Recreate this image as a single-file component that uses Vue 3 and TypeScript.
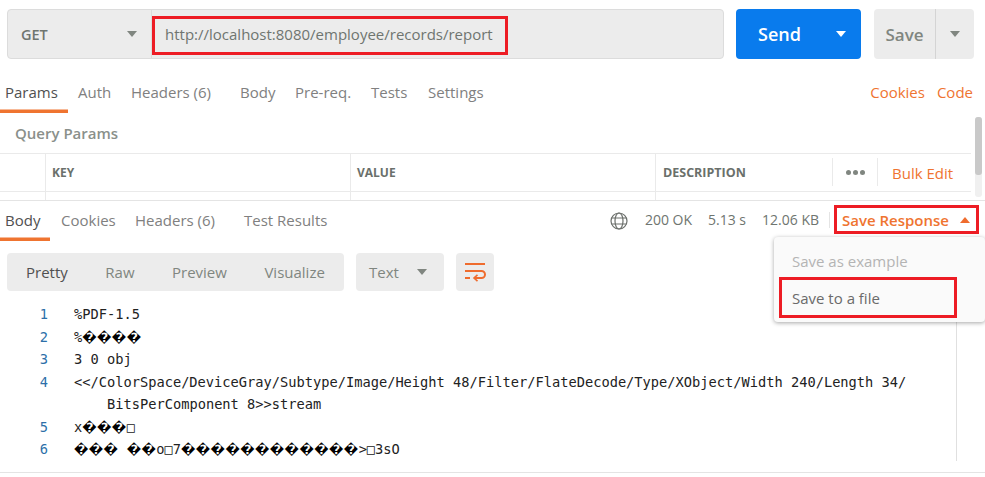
<script setup lang="ts">
const requestTabs = [
  { label: 'Params', active: true, w: 68, pad: 5 },
  { label: 'Auth', w: 63, pad: 10 },
  { label: 'Headers (6)', w: 109, pad: 0 },
  { label: 'Body', w: 55, pad: 0 },
  { label: 'Pre-req.', w: 76, pad: 0 },
  { label: 'Tests', w: 57, pad: 0 },
  { label: 'Settings', w: 70, pad: 0 },
]
const responseTabs = [
  { label: 'Body', active: true, w: 50, pad: 5 },
  { label: 'Cookies', w: 75, pad: 11 },
  { label: 'Headers (6)', w: 109, pad: 10 },
  { label: 'Test Results', w: 100, pad: 10 },
]
const views = ['Pretty', 'Raw', 'Preview', 'Visualize']
const R = '\uFFFD'
const T = '\u25A1'
const raw = [
  { n: '1', text: '%PDF-1.5' },
  { n: '2', text: '%' + R.repeat(4) },
  { n: '3', text: '3 0 obj' },
  { n: '4', text: '<</ColorSpace/DeviceGray/Subtype/Image/Height 48/Filter/FlateDecode/Type/XObject/Width 240/Length 34/' },
  { n: '', text: 'BitsPerComponent 8>>stream', wrap: true },
  { n: '5', text: 'x' + R.repeat(3) + T },
  { n: '6', text: R.repeat(3) + ' ' + R.repeat(2) + 'o' + T + '7' + R.repeat(12) + '>' + T + '3sO' },
]
const lines = raw.map((l) => ({
  ...l,
  parts: l.text.split(/(\uFFFD+)/).filter(Boolean).map((s) => ({ s, rep: s[0] === R })),
}))
</script>

<template>
  <div class="page">
    <div class="bar">
      <div class="url-box">
        <div class="method"><span>GET</span><i class="caret grey"></i></div>
        <div class="url"><span>http://localhost:8080/employee/records/report</span></div>
        <div class="mark mark-url"></div>
      </div>
      <div class="send"><span>Send</span><i class="caret white"></i></div>
      <div class="save"><span class="save-label">Save</span><span class="save-arrow"><i class="caret grey"></i></span></div>
    </div>

    <div class="tabs req-tabs">
      <span v-for="t in requestTabs" :key="t.label" class="tab" :class="{ active: t.active }" :style="{ width: t.w + 'px', paddingLeft: t.pad + 'px' }">{{ t.label }}</span>
      <span class="spacer"></span>
      <span class="link cookies">Cookies</span>
      <span class="link code-link">Code</span>
    </div>

    <div class="params">
      <div class="params-title">Query Params</div>
      <div class="table">
        <div class="row head">
          <div class="cell c0"></div>
          <div class="cell c1">KEY</div>
          <div class="cell c1">VALUE</div>
          <div class="cell c2">DESCRIPTION</div>
          <div class="cell c3"><i></i><i></i><i></i></div>
          <div class="cell c4">Bulk Edit</div>
        </div>
        <div class="row stub">
          <div class="cell c0"></div>
          <div class="cell c1"></div>
          <div class="cell c1"></div>
          <div class="cell c2"></div>
        </div>
      </div>
      <div class="scroll"><div class="thumb"></div></div>
    </div>

    <div class="response">
      <div class="tabs res-tabs">
        <span v-for="t in responseTabs" :key="t.label" class="tab" :class="{ active: t.active }" :style="{ width: t.w + 'px', paddingLeft: t.pad + 'px' }">{{ t.label }}</span>
        <span class="spacer"></span>
        <svg class="globe" width="18" height="18" viewBox="0 0 18 18" fill="none" stroke="#6b6f6b" stroke-width="1.2">
          <circle cx="9" cy="9" r="8" />
          <ellipse cx="9" cy="9" rx="4" ry="8" />
          <path d="M1.6 6h14.8M1.6 12h14.8" />
        </svg>
        <span class="meta m1">200 OK</span>
        <span class="meta m2">5.13 s</span>
        <span class="meta m3">12.06 KB</span>
        <span class="sep"></span>
        <div class="save-response">
          <span>Save Response</span>
          <i class="caret up"></i>
        </div>
      </div>

      <div class="toolbar">
        <div class="views">
          <span v-for="(v, i) in views" :key="v" class="view" :class="{ on: i === 0 }">{{ v }}</span>
        </div>
        <div class="format"><span>Text</span><i class="caret grey"></i></div>
        <div class="wrap-btn">
          <svg width="22" height="20" viewBox="0 0 22 20" fill="none" stroke="#ef6c2e" stroke-width="2">
            <path d="M1 2h20" />
            <path d="M1 9h16.5a3.2 3.2 0 0 1 0 7H11" />
            <path d="M1 16h5" />
            <path d="M13.5 12.8 10 16l3.5 3.2" stroke-width="1.6" />
          </svg>
        </div>
      </div>

      <div class="code">
        <div v-for="(l, i) in lines" :key="i" class="line">
          <span class="num">{{ l.n }}</span>
          <span class="txt" :class="{ wrapped: l.wrap }"><span v-for="(p, j) in l.parts" :key="j" :class="{ rep: p.rep }">{{ p.s }}</span></span>
        </div>
      </div>
    </div>

    <div class="menu">
      <div class="item disabled">Save as example</div>
      <div class="item">Save to a file</div>
      <div class="mark mark-file"></div>
    </div>
  </div>
</template>

<style>
html, body { margin: 0; background: #fff; overflow: hidden; }
</style>

<style scoped>
.page {
  position: relative;
  width: 985px;
  height: 477px;
  overflow: hidden;
  background: #fff;
  font-family: "Open Sans", "Noto Sans", sans-serif;
  font-size: 15px;
  color: #808080;
  box-sizing: border-box;
}
.bar {
  display: flex;
  padding: 9px 11px 0 7px;
  height: 59px;
  box-sizing: border-box;
}
.url-box {
  position: relative;
  width: 717px;
  height: 50px;
  display: flex;
  box-sizing: border-box;
  background: #ececec;
  border: 1px solid #dcdcdc;
  border-radius: 4px;
}
.method {
  width: 144px;
  box-sizing: border-box;
  border-right: 1px solid #dcdcdc;
  display: flex;
  align-items: center;
  justify-content: space-between;
  padding: 0 14px 0 13px;
  font-weight: 600;
  font-size: 14.5px;
  color: #6f7570;
}
.url {
  flex: 1;
  display: flex;
  align-items: center;
  padding-left: 13px;
  font-size: 15px;
  color: #6f7570;
}
.caret {
  display: block;
  width: 0;
  height: 0;
  border-left: 5px solid transparent;
  border-right: 5px solid transparent;
  border-top: 6px solid #808680;
}
.caret.white { border-top-color: #fff; }
.caret.up {
  border-top: 0;
  border-bottom: 6px solid #ef6c2e;
}
.mark {
  position: absolute;
  box-sizing: border-box;
  border: 3px solid #ed1c24;
}
.mark-url { left: 144px; top: 6px; width: 356px; height: 39px; }
.send {
  margin-left: 12px;
  width: 125px;
  height: 50px;
  background: #097bed;
  border-radius: 4px;
  color: #fff;
  font-weight: 600;
  font-size: 18px;
  display: flex;
  align-items: center;
  justify-content: space-between;
  padding: 0 15px 0 22px;
  box-sizing: border-box;
}
.save {
  margin-left: 13px;
  width: 100px;
  height: 50px;
  background: #ececec;
  border-radius: 4px;
  display: flex;
  color: #808680;
  font-weight: 600;
  font-size: 17px;
}
.save-label {
  width: 62px;
  box-sizing: border-box;
  border-right: 1px solid #d4d4d4;
  display: flex;
  align-items: center;
  justify-content: center;
}
.save-arrow {
  flex: 1;
  display: flex;
  align-items: center;
  justify-content: center;
}
.tabs {
  display: flex;
  align-items: stretch;
}
.req-tabs { height: 54px; }
.tab {
  box-sizing: border-box;
  padding-top: 23px;
  line-height: 20px;
  font-size: 15px;
  color: #808080;
  white-space: nowrap;
  flex: none;
}
.tab.active {
  color: #505050;
  box-shadow: inset 0 -3.5px 0 #ef7430;
}
.spacer { flex: 1; }
.link {
  padding-top: 23px;
  line-height: 20px;
  font-size: 15px;
  color: #ef7430;
}
.code-link { margin-left: 12px; margin-right: 12px; }
.params {
  position: relative;
  height: 88px;
  border-bottom: 1px solid #e4e4e4;
  box-sizing: border-box;
  padding-top: 10px;
}
.params-title {
  padding-left: 15px;
  height: 30px;
  line-height: 20px;
  font-weight: 600;
  font-size: 15px;
  color: #8a908b;
}
.table {
  width: 971px;
  border-top: 1px solid #eaeaea;
}
.row {
  display: flex;
  box-sizing: border-box;
}
.head {
  height: 38px;
  border-bottom: 1px solid #eaeaea;
  align-items: stretch;
}
.stub { height: 8px; }
.cell {
  box-sizing: border-box;
  border-right: 1px solid #eaeaea;
  padding-left: 6px;
  display: flex;
  align-items: center;
  font-weight: 700;
  font-size: 12px;
  color: #6a706b;
}
.c0 { width: 46px; padding: 0; }
.c1 { width: 305px; }
.c2 { width: 176px; font-size: 12.5px; padding-left: 7px; }
.head .c2 { border-right: 0; }
.stub .c2 { border-right: 0; }
.c3 {
  width: 46px;
  height: 28px;
  margin-top: 4px;
  padding: 0;
  gap: 2px;
  justify-content: center;
  border-left: 1px solid #eaeaea;
}
.c3 i {
  width: 5px;
  height: 5px;
  border-radius: 50%;
  background: #808680;
}
.c4 {
  flex: 1;
  border-right: 0;
  padding-left: 14px;
  font-weight: 400;
  font-size: 15px;
  color: #ef7430;
}
.scroll {
  position: absolute;
  left: 975px;
  top: 4px;
  width: 7px;
  height: 80px;
  border-radius: 3px;
  background: #f0f0f0;
}
.thumb {
  height: 58px;
  border-radius: 3px;
  background: #c9c9c9;
}
.res-tabs { height: 40px; }
.res-tabs .tab { padding-top: 9px; }
.globe { margin-top: 11px; flex: none; }
.meta {
  padding-top: 9px;
  line-height: 20px;
  font-size: 14px;
  color: #6f7570;
  white-space: nowrap;
}
.m1 { margin-left: 17px; }
.m2 { margin-left: 16px; }
.m3 { margin-left: 16px; }
.sep {
  width: 1px;
  height: 16px;
  margin: 11px 0 0 10px;
  background: #e4e4e4;
}
.save-response {
  box-sizing: border-box;
  margin: 4px 6px 0 4px;
  width: 145px;
  height: 29px;
  border: 3px solid #ed1c24;
  display: flex;
  align-items: center;
  justify-content: space-between;
  padding: 0 6px 0 5px;
  color: #ef7430;
  font-weight: 600;
  font-size: 15px;
  white-space: nowrap;
}
.toolbar {
  display: flex;
  margin-top: 12px;
  padding-left: 7px;
  height: 38px;
}
.views {
  width: 337px;
  height: 38px;
  background: #ececec;
  border-radius: 4px;
  display: flex;
  align-items: center;
  gap: 37.5px;
  padding-left: 19px;
  box-sizing: border-box;
}
.view { color: #808680; font-size: 15px; }
.view.on { color: #505050; }
.format {
  margin-left: 12px;
  width: 88px;
  background: #ececec;
  border-radius: 4px;
  display: flex;
  align-items: center;
  justify-content: space-between;
  padding: 0 17px 0 13px;
  box-sizing: border-box;
  color: #808680;
}
.wrap-btn {
  margin-left: 12px;
  width: 38px;
  background: #ececec;
  border-radius: 4px;
  display: flex;
  align-items: center;
  justify-content: center;
}
.code {
  margin-top: 12px;
  width: 957px;
  height: 158px;
  border-right: 1px solid #e0e0e0;
  box-sizing: border-box;
  font-family: "DejaVu Sans Mono", "Liberation Mono", monospace;
  font-size: 13.7px;
  line-height: 22.5px;
  color: #222;
}
.line {
  display: flex;
  white-space: pre;
  height: 22.5px;
}
.num {
  width: 48px;
  text-align: right;
  color: #2d6fa8;
  flex: none;
}
.txt { margin-left: 26px; }
.txt.wrapped { margin-left: 59px; }
.rep {
  font-family: "DejaVu Sans", sans-serif;
  font-size: 12.9px;
  font-weight: 700;
  letter-spacing: 0.45px;
  color: #000;
}
.response {
  height: 272px;
  border-bottom: 1px solid #e4e4e4;
  box-sizing: border-box;
}
.menu {
  position: absolute;
  left: 774px;
  top: 237px;
  width: 211px;
  height: 85px;
  box-sizing: border-box;
  background: #fafafa;
  border-radius: 4px;
  box-shadow: 0 1px 4px rgba(0, 0, 0, 0.35);
  padding-top: 6px;
}
.item {
  height: 37px;
  line-height: 37px;
  padding-left: 18px;
  font-size: 15px;
  color: #6a6a6a;
}
.item.disabled { color: #b4b4b4; }
.mark-file { left: 5px; top: 40px; width: 178px; height: 41px; }
</style>
